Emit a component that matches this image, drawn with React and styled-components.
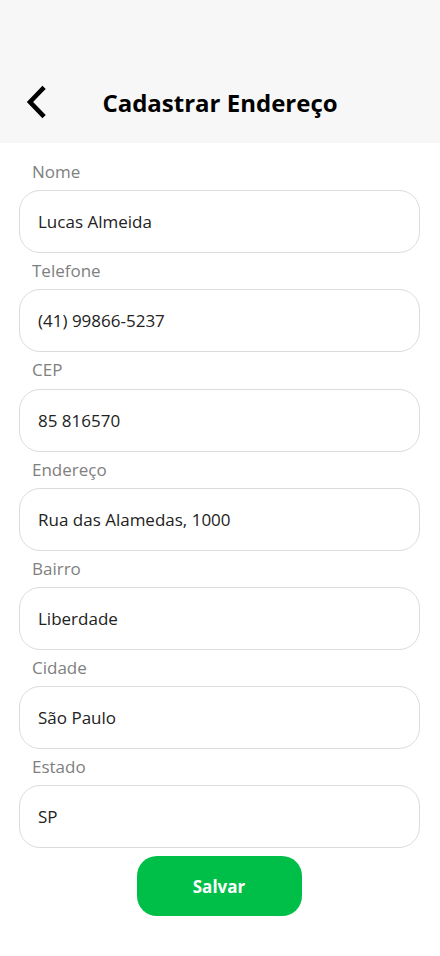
import React from 'react';
import styled, { createGlobalStyle } from 'styled-components';

const fields = [
    { label: 'Nome', value: 'Lucas Almeida' },
    { label: 'Telefone', value: '(41) 99866-5237' },
    { label: 'CEP', value: '85 816570' },
    { label: 'Endereço', value: 'Rua das Alamedas, 1000' },
    { label: 'Bairro', value: 'Liberdade' },
    { label: 'Cidade', value: 'São Paulo' },
    { label: 'Estado', value: 'SP' },
];

const GlobalStyle = createGlobalStyle`
    body {
        margin: 0;
        background: #ffffff;
        font-family: "Open Sans", "Noto Sans", sans-serif;
    }
    * { box-sizing: border-box; }
`;

const App = () => {
    return (
        <Page>
            <GlobalStyle />
            <Header>
                <BackButton aria-label="Voltar">
                    <svg width="24" height="34" viewBox="0 0 24 34" fill="none">
                        <path d="M18.5 4 L6 17 L18.5 30" stroke="#000" strokeWidth="4.6" strokeLinecap="square" strokeLinejoin="miter" />
                    </svg>
                </BackButton>
                <Title>Cadastrar Endereço</Title>
            </Header>
            <Form>
                {fields.map(f => (
                    <Field key={f.label}>
                        <Label>{f.label}</Label>
                        <Input defaultValue={f.value} />
                    </Field>
                ))}
                <SaveButton type="button">Salvar</SaveButton>
            </Form>
        </Page>
    );
};

const Page = styled.div`
    width: 440px;
    min-height: 956px;
    background: #fff;
`;

const Header = styled.div`
    position: relative;
    height: 143px;
    background: #f7f7f7;
    display: flex;
    align-items: center;
    justify-content: center;
    padding-top: 62px;
`;

const BackButton = styled.button`
    position: absolute;
    left: 24px;
    top: 85px;
    background: none;
    border: none;
    padding: 0;
    cursor: pointer;
    display: flex;
`;

const Title = styled.h1`
    margin: 0;
    font-size: 24px;
    font-weight: 700;
    color: #000;
`;

const Form = styled.div`
    display: flex;
    flex-direction: column;
    padding: 11px 20px 0 19px;
`;

const Field = styled.div`
    display: flex;
    flex-direction: column;
`;

const Label = styled.label`
    height: 36.2px;
    line-height: 36px;
    padding-left: 13px;
    font-size: 17px;
    color: #808080;
`;

const Input = styled.input`
    height: 63px;
    width: 100%;
    border: 1px solid #dcdcdc;
    border-radius: 21px;
    padding: 0 18px;
    font-family: "Open Sans", "Noto Sans", sans-serif;
    font-size: 17px;
    color: #222;
    background: #fff;
    outline: none;
`;

const SaveButton = styled.button`
    align-self: center;
    margin: 8px 0 0 -1px;
    width: 165px;
    height: 60px;
    border: none;
    border-radius: 20px;
    background: #00bf48;
    color: #fff;
    font-family: "Open Sans", "Noto Sans", sans-serif;
    font-size: 17px;
    font-weight: 700;
    cursor: pointer;
`;

export default App;
